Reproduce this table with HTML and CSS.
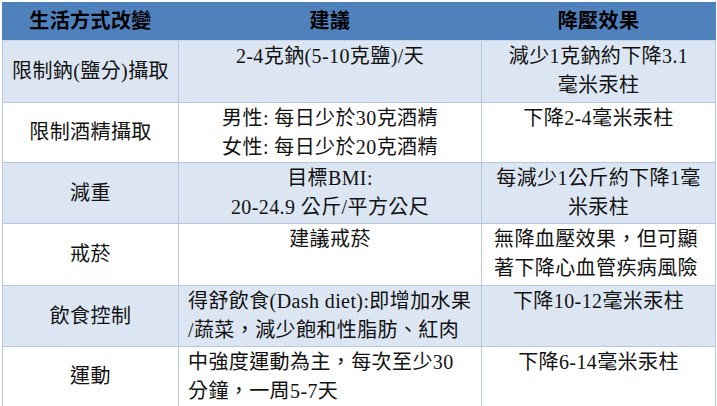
FILE: index.html
```
<!DOCTYPE html>
<html lang="zh-Hant">
<head>
<meta charset="utf-8">
<link rel="stylesheet" href="styles.css">
</head>
<body>
<table class="bp">
  <colgroup>
    <col class="c1"><col class="c2"><col class="c3">
  </colgroup>
  <thead>
    <tr class="head">
      <th>生活方式改變</th>
      <th>建議</th>
      <th>降壓效果</th>
    </tr>
  </thead>
  <tbody>
    <tr class="band r1">
      <td class="name">限制鈉(鹽分)攝取</td>
      <td class="mid">2-4克鈉(5-10克鹽)/天</td>
      <td class="mid">減少1克鈉約下降3.1<br>毫米汞柱</td>
    </tr>
    <tr class="plain r2">
      <td class="name">限制酒精攝取</td>
      <td class="mid">男性: 每日少於30克酒精<br>女性: 每日少於20克酒精</td>
      <td class="mid">下降2-4毫米汞柱</td>
    </tr>
    <tr class="band r3">
      <td class="name">減重</td>
      <td class="mid">目標BMI:<br>20-24.9 公斤/平方公尺</td>
      <td class="mid">每減少1公斤約下降1毫<br>米汞柱</td>
    </tr>
    <tr class="plain r4">
      <td class="name">戒菸</td>
      <td class="mid">建議戒菸</td>
      <td class="left">無降血壓效果，但可顯<br>著下降心血管疾病風險</td>
    </tr>
    <tr class="band r5">
      <td class="name">飲食控制</td>
      <td class="left">得舒飲食(Dash diet):即增加水果<br>/蔬菜，減少飽和性脂肪、紅肉</td>
      <td class="mid">下降10-12毫米汞柱</td>
    </tr>
    <tr class="plain r6">
      <td class="name">運動</td>
      <td class="left">中強度運動為主，每次至少30<br>分鐘，一周5-7天</td>
      <td class="mid">下降6-14毫米汞柱</td>
    </tr>
  </tbody>
</table>
</body>
</html>
```
FILE: styles.css
```
html, body {
  margin: 0;
  padding: 0;
  background: #ffffff;
}
body {
  padding: 2px 0 0 2px;
}
.bp {
  border-collapse: collapse;
  table-layout: fixed;
  width: 713px;
  font-family: "Liberation Serif", "Noto Sans CJK TC", serif;
  font-size: 20px;
  line-height: 29px;
  letter-spacing: 0.4px;
  color: #111111;
}
.c1 { width: 176px; }
.c2 { width: 303px; }
.c3 { width: 234px; }
.bp th, .bp td {
  border: 1px solid #b7c7df;
  padding: 0 8px;
  white-space: nowrap;
  overflow: hidden;
}
.head { height: 38px; }
.head th {
  background: #4f81bd;
  color: #000000;
  font-weight: bold;
  text-align: center;
  vertical-align: middle;
  border-color: #4f81bd;
  border-bottom-color: #c9d6ea;
}
.band td { background: #dce6f2; }
.plain td { background: #ffffff; }
.r1 { height: 62px; }
.r2 { height: 60px; }
.r3 { height: 61px; }
.r4 { height: 62px; }
.r5 { height: 61px; }
.r6 { height: 59px; }
.bp td.name {
  text-align: center;
  vertical-align: middle;
}
.bp td.mid {
  text-align: center;
  vertical-align: top;
  padding-top: 1px;
}
.bp td.left {
  text-align: left;
  vertical-align: top;
  padding-top: 1px;
  padding-left: 9px;
}
.r4 td.left { padding-left: 12px; }
```
